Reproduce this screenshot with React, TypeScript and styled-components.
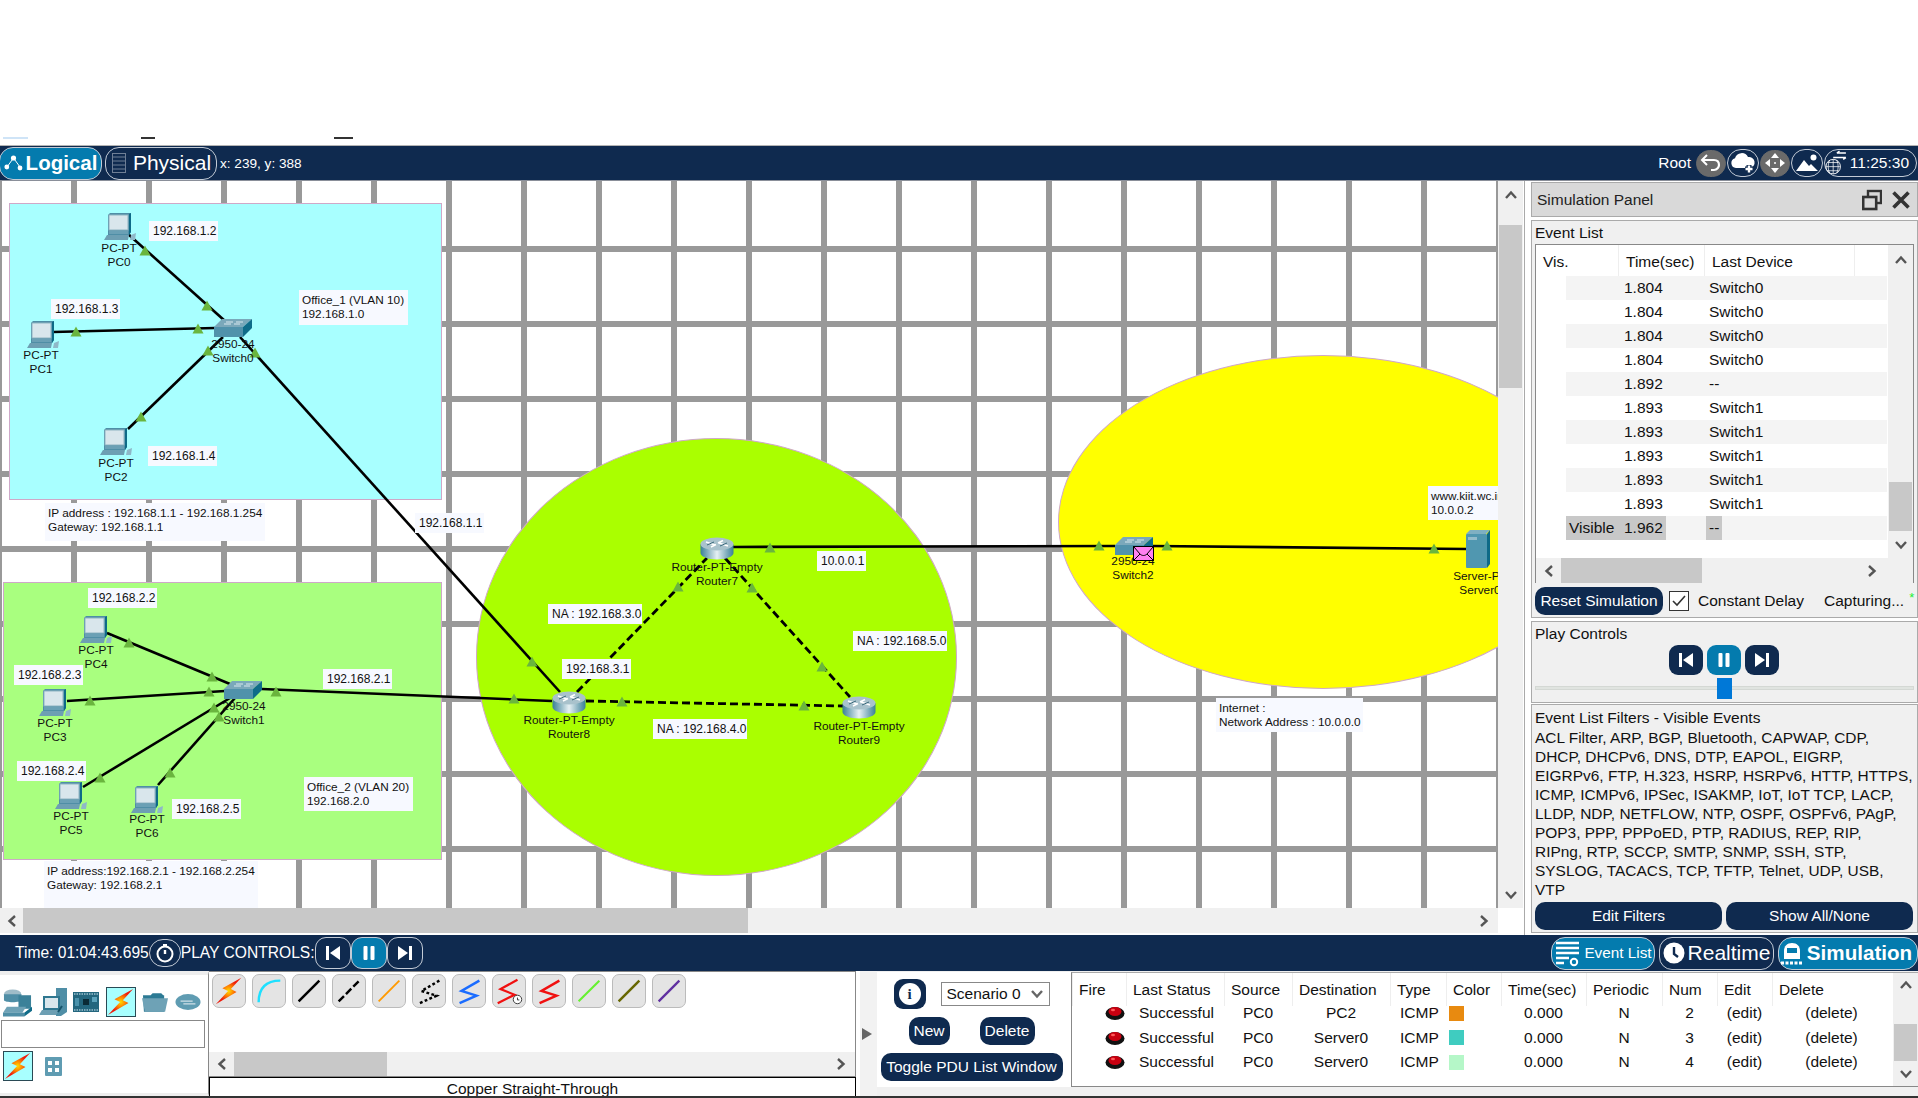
import React from 'react';
import styled, { createGlobalStyle } from 'styled-components';

const NAVY = '#0f2a4f';
const BLUE = '#047bae';
const Y0 = 181;

const Global = createGlobalStyle`
  html, body { margin: 0; padding: 0; background: #fff; overflow: hidden; }
  * { box-sizing: border-box; }
  body { font-family: "Liberation Sans", Arial, sans-serif; color: #111; }
`;

const Page = styled.div`
  width: 1918px; height: 1098px; display: flex; flex-direction: column; background: #fff; overflow: hidden;
`;
const TopStrip = styled.div`
  height: 146px; display: flex; align-items: flex-end; padding-bottom: 6px; border-bottom: 1px solid #b4b4b4; flex: none;
`;
const Mark = styled.div<{ $w: number; $ml: number; $c: string }>`
  width: ${p => p.$w}px; height: 2px; margin-left: ${p => p.$ml}px; background: ${p => p.$c};
`;

const NavBar = styled.div`
  height: 35px; flex: none; background: ${NAVY}; display: flex; align-items: center; color: #fff; border-bottom: 1px solid #8a8f99;
`;
const PillBtn = styled.div<{ $on?: boolean; $w: number; $h?: number; $size?: number; $bold?: boolean; $ml?: number; $grey?: boolean; $r?: number; $pr?: number }>`
  width: ${p => p.$w}px; height: ${p => p.$h ?? 33}px; margin-left: ${p => p.$ml ?? 0}px; padding-right: ${p => p.$pr ?? 0}px;
  flex: none; display: flex; align-items: center; justify-content: center; gap: 3px;
  background: ${p => (p.$on ? BLUE : p.$grey ? '#6a6a6a' : 'transparent')};
  border: 1px solid ${p => (p.$grey ? '#6a6a6a' : '#c3cbd6')};
  border-radius: ${p => p.$r ?? 14}px;
  color: #fff; white-space: nowrap;
  font-size: ${p => p.$size ?? 15.5}px; font-weight: ${p => (p.$bold ? 700 : 400)};
`;
const Coords = styled.span`font-size: 13.6px; margin-left: 3px;`;
const NavRight = styled.div`margin-left: auto; display: flex; align-items: center; height: 100%; padding-right: 1px;`;
const RootLabel = styled.span`font-size: 15.5px; margin-right: 5px;`;

const Main = styled.div`height: 754px; flex: none; display: flex;`;
const Workspace = styled.div`width: 1525px; flex: none; display: flex; flex-direction: column; border-right: 1px solid #aaa;`;
const CanvasRow = styled.div`height: 727px; display: flex; flex: none;`;
const Canvas = styled.div`
  width: 1498px; height: 727px; position: relative; overflow: hidden; flex: none; background-color: #fff;
  background-image:
    repeating-linear-gradient(90deg, #999 0 2px, transparent 2px 71px, #999 71px 75px),
    repeating-linear-gradient(180deg, transparent 0 65px, #999 65px 71px, transparent 71px 75px);
`;
const At = styled.div.attrs<{ $x: number; $y: number; $w?: number; $h?: number }>(p => ({
  style: { left: p.$x, top: p.$y - Y0, width: p.$w, height: p.$h },
}))`position: absolute;`;
const Zone = styled(At)<{ $fill: string; $round?: boolean }>`
  background: ${p => p.$fill}; border: 1px solid #cfa8c8; border-radius: ${p => (p.$round ? '50%' : '0')};
`;
const LinkLayer = styled.svg`position: absolute; left: 0; top: 0;`;
const Note = styled(At)`
  background: #f7f9ff; font-size: 11.8px; line-height: 14px; color: #111; padding: 3px 3px 0; white-space: nowrap; overflow: hidden;
`;
const IpNote = styled(Note)`font-size: 12px; line-height: 21px; padding: 0 4px; text-align: center;`;
const DevName = styled.div.attrs<{ $x: number; $y: number }>(p => ({
  style: { left: p.$x, top: p.$y - Y0 - 7 },
}))`
  position: absolute; transform: translateX(-50%); text-align: center; font-size: 11.8px; line-height: 14px; white-space: nowrap; color: #111;
`;
const DevIcon = styled(At)`line-height: 0;`;

const ScrollY = styled.div`width: 25px; flex: none; background: #f0f0f0; display: flex; flex-direction: column; align-items: center;`;
const ChevCell = styled.div<{ $h: number; $auto?: boolean; $w?: number; $end?: boolean }>`
  height: ${p => p.$h}px; width: ${p => p.$w ?? 25}px; flex: none; display: flex; align-items: center; justify-content: center;
  margin-top: ${p => (p.$auto ? 'auto' : '0')}; margin-left: ${p => (p.$end ? 'auto' : '0')};
`;
const ThumbY = styled.div<{ $top: number; $h: number }>`
  width: 23px; height: ${p => p.$h}px; margin-top: ${p => p.$top}px; background: #c8c8c8; flex: none;
`;
const ScrollX = styled.div<{ $h?: number }>`
  height: ${p => p.$h ?? 25}px; flex: none; background: #f0f0f0; display: flex; align-items: center;
`;
const ThumbX = styled.div<{ $w: number }>`width: ${p => p.$w}px; height: 100%; background: #c8c8c8; flex: none;`;
const HScrollWrap = styled.div`width: 1498px; flex: none;`;

const Side = styled.div`flex: 1; padding: 1px 0 0 6px; display: flex; flex-direction: column; background: #fff;`;
const Section = styled.div<{ $h: number; $mt: number }>`
  height: ${p => p.$h}px; margin-top: ${p => p.$mt}px; border: 1px solid #aaa; background: #f0f0f0; padding: 0 3px; flex: none; font-size: 15.5px;
`;
const SideTitle = styled.div`
  height: 35px; flex: none; background: #d9d9d9; border: 1px solid #aaa; display: flex; align-items: center; padding: 0 7px 0 5px; font-size: 15.5px; color: #222;
`;
const TitleIcons = styled.div`margin-left: auto; display: flex; align-items: center; gap: 10px;`;
const BoxLabel = styled.div`height: 23px; line-height: 24px;`;
const ListBox = styled.div`height: 339px; border: 1px solid #888; display: flex; flex-direction: column; background: #fff;`;
const ListTop = styled.div`height: 313px; display: flex; flex: none;`;
const ListBody = styled.div`flex: 1;`;
const ListHead = styled.div`height: 31px; display: flex; align-items: center;`;
const HeadCell = styled.div<{ $w: number }>`
  width: ${p => p.$w}px; height: 100%; padding-left: 7px; line-height: 33px; border-right: 1px solid #eee;
`;
const Row = styled.div<{ $alt?: boolean }>`
  height: 24px; margin-left: 30px; width: 321px; display: flex; align-items: center; line-height: 24px;
  background: ${p => (p.$alt ? '#f4f4f4' : '#fff')};
`;
const VisGroup = styled.div<{ $sel?: boolean }>`
  width: 100px; height: 100%; display: flex; background: ${p => (p.$sel ? '#c8c8c8' : 'transparent')};
`;
const VisCell = styled.div`width: 58px; padding-left: 3px;`;
const GapCell = styled.div`width: 40px; flex: none;`;
const DevCell = styled.div<{ $sel?: boolean }>`
  padding: 0 3px; height: 100%; background: ${p => (p.$sel ? '#c8c8c8' : 'transparent')};
`;
const ControlRow = styled.div`display: flex; align-items: center; margin-top: 4px; height: 28px; white-space: nowrap;`;
const DarkBtn = styled.div<{ $w: number; $h?: number }>`
  width: ${p => p.$w}px; height: ${p => p.$h ?? 28}px; flex: none; background: ${NAVY}; color: #fff; border-radius: 10px;
  display: flex; align-items: center; justify-content: center; font-size: 15.5px; white-space: nowrap;
`;
const Check = styled.div`
  width: 20px; height: 20px; border: 1px solid #333; background: #fff; margin-left: 6px; display: flex; align-items: center; justify-content: center; flex: none;
`;
const ConstLabel = styled.span`margin-left: 9px; flex: none;`;
const CaptureLabel = styled.span`margin-left: 20px; flex: none;`;
const Star = styled.span`color: #22ee33; margin-left: 5px; font-size: 13px; align-self: flex-start; margin-top: 3px; flex: none;`;
const PlayLabel = styled.div`height: 23px; line-height: 24px;`;
const PlayRow = styled.div`display: flex; justify-content: center; gap: 4px; padding-right: 1px;`;
const PlayBtn = styled.div<{ $on?: boolean }>`
  width: 34px; height: 30px; border-radius: 9px; background: ${p => (p.$on ? BLUE : NAVY)}; display: flex; align-items: center; justify-content: center;
`;
const SliderTrack = styled.div`
  height: 4px; margin-top: 11px; background: #e0e4e0; border: 1px solid #d4d8d4; position: relative;
`;
const SliderThumb = styled.div`
  position: absolute; left: 181px; top: -9px; width: 15px; height: 21px; background: #0078d7;
`;
const FilterTitle = styled.div`height: 23px; line-height: 25px;`;
const FilterLine = styled.div`height: 19px; line-height: 19px; white-space: nowrap; font-size: 15.45px;`;
const FilterBtns = styled.div`display: flex; gap: 4px; margin-top: 3px;`;

const TimeBar = styled.div`
  height: 36px; flex: none; background: ${NAVY}; color: #fff; display: flex; align-items: center; padding-left: 15px; font-size: 15.6px;
`;
const TimeRight = styled.div`margin-left: auto; display: flex; align-items: center; gap: 4px;`;
const CircleBtn = styled.div`
  width: 32px; height: 28px; border: 1px solid #c3cbd6; border-radius: 14px; display: flex; align-items: center; justify-content: center; flex: none;
`;
const MiniPlay = styled.div<{ $on?: boolean }>`
  width: 36px; height: 32px; flex: none; border: 1px solid #c3cbd6; border-radius: 11px; background: ${p => (p.$on ? BLUE : 'transparent')};
  display: flex; align-items: center; justify-content: center;
`;
const MiniGroup = styled.div`display: flex; margin-left: 0;`;

const Bottom = styled.div`height: 125px; flex: none; display: flex; background: #f0f0f0;`;
const Palette = styled.div`width: 209px; flex: none; background: #fff; border-right: 1px solid #888; border-top: 4px solid #eee; border-bottom: 3px solid #eee; padding-left: 1px;`;
const PaletteRow = styled.div`height: 30px; margin-top: 12px; display: flex; align-items: center; gap: 6.5px; padding-left: 2px;`;
const PaletteIcon = styled.div<{ $w: number; $sel?: boolean }>`
  width: ${p => p.$w}px; height: 30px; flex: none; line-height: 0; display: flex; align-items: center; justify-content: center;
  background: ${p => (p.$sel ? '#a8ffff' : 'transparent')}; border: ${p => (p.$sel ? '1px solid #2a4a55' : '0')};
`;
const PaletteInput = styled.div`width: 204px; height: 28px; margin-top: 3px; border: 1px solid #888; background: #fff;`;
const PaletteSub = styled.div`display: flex; align-items: center; gap: 12px; margin-top: 3px; padding-left: 2px;`;
const GridIcon = styled.div`line-height: 0;`;

const CablePanel = styled.div`width: 647px; flex: none; display: flex; flex-direction: column; background: #fff; border-top: 1px solid #888;`;
const CableRow = styled.div`height: 80px; flex: none; display: flex; align-items: flex-start; gap: 6px; padding: 2px 0 0 3px; border-right: 1px solid #888;`;
const CableBtn = styled.div`
  width: 34px; height: 34px; background: #e4e4e4; border: 1px solid #bbb; border-radius: 7px; line-height: 0; flex: none;
`;
const CableScroll = styled(ScrollX)`border-bottom: 1px solid #888; border-right: 1px solid #888;`;
const CableName = styled.div`
  flex: 1; border: 1px solid #000; border-bottom: 0; background: #fff; text-align: center; font-size: 15.5px; line-height: 21px; overflow: hidden;
`;
const Spacer = styled.div<{ $w: number }>`width: ${p => p.$w}px; flex: none; height: 100%;`;

const Gutter = styled.div`
  width: 21px; flex: none; background: #f2f2f2; border-left: 4px solid #fff; display: flex; align-items: center; justify-content: flex-start; padding-left: 1px;
`;
const Scenario = styled.div`
  width: 194px; flex: none; height: 115px; margin-top: 1px; background: #fff; display: flex; flex-direction: column; align-items: center; gap: 8px; padding: 7px 5px 0 0; font-size: 15.5px;
`;
const ScenRow = styled.div<{ $gap: number }>`display: flex; align-items: center; gap: ${p => p.$gap}px;`;
const InfoBtn = styled.div`
  width: 32px; height: 30px; border-radius: 9px; background: ${NAVY}; display: flex; align-items: center; justify-content: center;
`;
const InfoDot = styled.div`
  width: 22px; height: 22px; border-radius: 50%; background: #fff; color: ${NAVY}; font: bold 15px/22px "Liberation Serif", serif; text-align: center;
`;
const SelectBox = styled.div`
  width: 109px; height: 24px; border: 1px solid #888; background: #fff; display: flex; align-items: center; justify-content: space-between; padding: 0 5px; white-space: nowrap;
`;

const PduPanel = styled.div`flex: 1; display: flex; flex-direction: column; min-width: 0;`;
const PduBox = styled.div`height: 115px; margin-top: 1px; background: #fff; border-left: 1px solid #888; border-bottom: 1px solid #888; border-top: 1px solid #aaa; display: flex; font-size: 15.5px;`;
const PduTable = styled.div`flex: 1; display: flex; flex-direction: column;`;
const COLS = '54px 98px 68px 98px 56px 55px 85px 76px 55px 55px 119px';
const PduHead = styled.div`height: 31px; display: grid; grid-template-columns: ${COLS};`;
const PduHeadCell = styled.div`padding-left: 6px; line-height: 33px; border-left: 1px solid #eee; white-space: nowrap;`;
const PduRows = styled.div`margin-top: -3px;`;
const PduRow = styled.div`height: 24.5px; display: grid; grid-template-columns: ${COLS}; align-items: center; white-space: nowrap;`;
const FireCell = styled.div`padding-left: 33px; line-height: 0;`;
const LeftCell = styled.div<{ $pl: number }>`padding-left: ${p => p.$pl}px;`;
const CenterCell = styled.div`text-align: center;`;
const Swatch = styled.div<{ $c: string }>`width: 15px; height: 15px; margin-left: 3px; background: ${p => p.$c};`;

const BottomEdge = styled.div`height: 2px; flex: 1; background: #333;`;

/* ---------- drawings ---------- */

const Chevron = ({ dir, color = '#555' }: { dir: 'up' | 'down' | 'left' | 'right'; color?: string }) => {
  const r = { up: 0, right: 90, down: 180, left: 270 }[dir];
  return (
    <svg width="14" height="14" viewBox="0 0 14 14">
      <polyline points="2,10 7,4.5 12,10" fill="none" stroke={color} strokeWidth="2.4" transform={`rotate(${r} 7 7)`} />
    </svg>
  );
};

const PcIcon = () => (
  <svg width="33" height="27" viewBox="0 0 33 27">
    <polygon points="4,2 6,0 27,0 27,19 25,22 4,22" fill="#4f8ea6" />
    <polygon points="25,1 27,0 27,19 25,22" fill="#0e6a87" />
    <rect x="5" y="2" width="19" height="15" fill="#d9e6ec" stroke="#8fb4c2" />
    <rect x="5" y="18" width="19" height="3" fill="#6aa0b5" />
    <polygon points="3,22 25,22 24,27 0,27" fill="#6d9fb3" />
    <polygon points="27,22 32,20 31,27 26,27" fill="#8fb8c8" />
  </svg>
);
const SwitchIcon = () => (
  <svg width="38" height="18" viewBox="0 0 38 18">
    <polygon points="8,0 38,0 29,8 0,8" fill="#7aa8ba" />
    <path d="M12 3h7M22 3h7M10 5h7M20 5h6" stroke="#d8e8ee" strokeWidth="1" />
    <rect x="0" y="8" width="29" height="10" fill="#5092ab" />
    <polygon points="29,8 38,0 38,9 29,18" fill="#0f6c89" />
  </svg>
);
const RouterIcon = () => (
  <svg width="34" height="23" viewBox="0 0 34 23">
    <defs>
      <linearGradient id="rtBody" x1="0" x2="1" y1="0" y2="0">
        <stop offset="0" stopColor="#3a7f97" />
        <stop offset="0.5" stopColor="#e6f0f3" />
        <stop offset="1" stopColor="#3a7f97" />
      </linearGradient>
    </defs>
    <path d="M0.5 7v9c0 3.6 7.4 6.5 16.5 6.5s16.5-2.9 16.5-6.5V7z" fill="url(#rtBody)" />
    <ellipse cx="17" cy="7" rx="16.5" ry="6.5" fill="#a9c2cc" />
    <path d="M6 5l9 3M28 9l-9-3M11 10l5-2.5M23 3.5l-5 2.5" stroke="#fff" strokeWidth="1.5" />
    <path d="M7 8l7-3M27 6l-7 3" stroke="#38677a" strokeWidth="1" />
  </svg>
);
const ServerIcon = () => (
  <svg width="24" height="38" viewBox="0 0 24 38">
    <polygon points="0,4 4,0 24,0 20,4" fill="#7fb0c2" />
    <rect x="0" y="4" width="21" height="34" rx="1" fill="#5097b0" />
    <polygon points="21,4 24,0 24,34 21,38" fill="#0e6a87" />
    <rect x="2" y="7" width="9" height="3" fill="#93bccb" />
  </svg>
);
const Envelope = () => (
  <svg width="21" height="15" viewBox="0 0 21 15">
    <rect x="0.5" y="0.5" width="20" height="14" fill="#ff80f0" stroke="#000" />
    <path d="M1 1l6 7c2 2 5 2 7 0l6-7M1 14l6-6M20 14l-6-6" fill="none" stroke="#000" strokeWidth="1" />
  </svg>
);
const BOLT = '28,1 8,12 14,15 1,29 23,16 17,13';
const Bolt = ({ s = 30 }: { s?: number }) => (
  <svg width={s} height={s} viewBox="0 0 30 30">
    <defs>
      <radialGradient id="boltFill" cx="0.5" cy="0.5" r="0.5">
        <stop offset="0" stopColor="#ffdd00" />
        <stop offset="0.35" stopColor="#ff8a00" />
        <stop offset="0.8" stopColor="#ee1c0c" />
      </radialGradient>
    </defs>
    <polygon points={BOLT} fill="url(#boltFill)" />
  </svg>
);

const PrevGlyph = ({ s = 1 }: { s?: number }) => (
  <svg width={16 * s} height={16 * s} viewBox="0 0 16 16">
    <rect x="1" y="1" width="3" height="14" fill="#fff" />
    <polygon points="15,1 15,15 5,8" fill="#fff" />
  </svg>
);
const NextGlyph = ({ s = 1 }: { s?: number }) => (
  <svg width={16 * s} height={16 * s} viewBox="0 0 16 16">
    <rect x="12" y="1" width="3" height="14" fill="#fff" />
    <polygon points="1,1 1,15 11,8" fill="#fff" />
  </svg>
);
const PauseGlyph = ({ s = 1 }: { s?: number }) => (
  <svg width={16 * s} height={16 * s} viewBox="0 0 16 16">
    <rect x="2.5" y="1" width="4" height="14" rx="1" fill="#fff" />
    <rect x="9.5" y="1" width="4" height="14" rx="1" fill="#fff" />
  </svg>
);

const LogicalGlyph = () => (
  <svg width="19" height="18" viewBox="0 0 19 18">
    <path d="M3 13L9.5 4L16 13" fill="none" stroke="#fff" strokeWidth="1" />
    <circle cx="9.5" cy="4" r="2.6" fill="#fff" />
    <circle cx="2.8" cy="13" r="2.4" fill="#fff" />
    <circle cx="16" cy="14" r="2.4" fill="#fff" />
  </svg>
);
const PhysicalGlyph = () => (
  <svg width="19" height="20" viewBox="0 0 19 20">
    <rect x="1.5" y="0.5" width="13" height="19" fill="none" stroke="#6f7f96" />
    <path d="M1.5 4h13M1.5 8h13M1.5 12h13M1.5 16h13" stroke="#6f7f96" />
  </svg>
);
const UndoGlyph = () => (
  <svg width="22" height="20" viewBox="0 0 22 20">
    <path d="M7 2L2 7L7 12" fill="none" stroke="#fff" strokeWidth="2" />
    <path d="M3 7h11c4 0 5 3 5 5s-2 5-5 5h-3" fill="none" stroke="#fff" strokeWidth="2.2" />
  </svg>
);
const CloudPlusGlyph = () => (
  <svg width="26" height="22" viewBox="0 0 26 22">
    <path d="M6 16a5 5 0 0 1-1-9.8A7 7 0 0 1 18 5a5.5 5.5 0 0 1 2 11z" fill="#fff" />
    <path d="M19 13v8M15 17h8" stroke={NAVY} strokeWidth="5" />
    <path d="M19 13.5v7M15.5 17h7" stroke="#fff" strokeWidth="2.4" />
  </svg>
);
const MoveGlyph = () => (
  <svg width="22" height="22" viewBox="0 0 22 22">
    <polygon points="11,1 15,6 7,6" fill="#fff" />
    <polygon points="11,21 15,16 7,16" fill="#fff" />
    <polygon points="1,11 6,7 6,15" fill="#fff" />
    <polygon points="21,11 16,7 16,15" fill="#fff" />
    <circle cx="11" cy="11" r="1" fill="#fff" />
  </svg>
);
const ImageGlyph = () => (
  <svg width="22" height="18" viewBox="0 0 22 18">
    <polygon points="0,17 8,6 13,12 15,10 22,17" fill="#fff" />
    <circle cx="17.5" cy="3.5" r="3" fill="#fff" />
  </svg>
);
const GlobeArrows = () => (
  <svg width="23" height="26" viewBox="0 0 24 26">
    <circle cx="9" cy="17" r="8" fill="none" stroke="#fff" strokeWidth="1" />
    <path d="M1 17h16M9 9v16M3 12.5h12M3 21.5h12M5 10c-2 4-2 10 0 14M13 10c2 4 2 10 0 14" fill="none" stroke="#fff" strokeWidth="0.8" />
    <path d="M13 2h10M13 2l3-2M9 7h14M23 7l-3 2" stroke="#fff" strokeWidth="1.6" fill="none" />
  </svg>
);
const ClockReset = () => (
  <svg width="20" height="20" viewBox="0 0 20 20">
    <circle cx="10" cy="11" r="7.5" fill="none" stroke="#fff" strokeWidth="2" />
    <rect x="8" y="1" width="4" height="2.5" fill="#fff" />
    <path d="M10 7v4" stroke="#fff" strokeWidth="2.4" />
  </svg>
);
const ListGlyph = () => (
  <svg width="27" height="27" viewBox="0 0 27 27">
    <path d="M2 3h23M2 8h23M2 13h23M2 18h13M2 23h8" stroke="#fff" strokeWidth="2.6" />
    <circle cx="20" cy="22" r="3.2" fill="none" stroke="#fff" strokeWidth="2" />
  </svg>
);
const ClockGlyph = () => (
  <svg width="22" height="22" viewBox="0 0 22 22">
    <circle cx="11" cy="11" r="10.5" fill="#fff" />
    <path d="M11 5v7l4 3" fill="none" stroke={NAVY} strokeWidth="2.4" />
  </svg>
);
const SimGlyph = () => (
  <svg width="24" height="24" viewBox="0 0 24 24">
    <path d="M4 18V10c0-5 3-8 8-8s8 3 8 8v8z" fill="#fff" />
    <rect x="7" y="7" width="10" height="5" fill={BLUE} />
    <path d="M1 22h22" stroke="#fff" strokeWidth="3" strokeDasharray="3 1.5" />
  </svg>
);
const RestoreGlyph = () => (
  <svg width="20" height="22" viewBox="0 0 20 22">
    <rect x="6" y="2" width="13" height="12" fill="none" stroke="#333" strokeWidth="2.4" />
    <rect x="1.2" y="8" width="13" height="12" fill="#d9d9d9" stroke="#333" strokeWidth="2.6" />
  </svg>
);
const CloseGlyph = () => (
  <svg width="18" height="18" viewBox="0 0 18 18">
    <path d="M1.5 1.5l15 15M16.5 1.5l-15 15" stroke="#333" strokeWidth="3.6" />
  </svg>
);
const CheckGlyph = () => (
  <svg width="14" height="12" viewBox="0 0 14 12">
    <path d="M1 6l4 4 8-9" fill="none" stroke="#333" strokeWidth="1.6" />
  </svg>
);
const DevicesGlyph = () => (
  <svg width="29" height="30" viewBox="0 0 30 30">
    <ellipse cx="10" cy="7" rx="9" ry="5" fill="#9fbcc8" />
    <path d="M1 7v6c0 3 18 3 18 0V7z" fill="#4f8ea6" />
    <rect x="16" y="8" width="13" height="14" fill="#3b8199" />
    <polygon points="4,20 24,20 20,26 0,26" fill="#6ea2b6" />
    <rect x="0" y="26" width="22" height="4" fill="#4f8ea6" />
    <polygon points="22,26 30,20 30,24 22,30" fill="#0f6c89" />
  </svg>
);
const EndDevGlyph = () => (
  <svg width="28" height="28" viewBox="0 0 28 28">
    <polygon points="17,0 28,0 28,24 22,28 17,28" fill="#4f8ea6" />
    <rect x="5" y="9" width="15" height="12" fill="#d9e6ec" stroke="#2f7790" strokeWidth="2" />
    <polygon points="3,22 20,22 17,27 0,27" fill="#6d9fb3" />
    <path d="M19 24l4-6" stroke="#16536a" strokeWidth="2" />
  </svg>
);
const BoardGlyph = () => (
  <svg width="26" height="20" viewBox="0 0 26 20">
    <rect width="26" height="20" fill="#23667e" />
    <path d="M1 2h24M1 18h24" stroke="#9cc1cf" strokeWidth="1.5" strokeDasharray="1.5 1" />
    <rect x="10" y="7" width="6" height="6" fill="#0a2a36" />
    <rect x="2" y="6" width="4" height="8" fill="#4b92ab" />
    <rect x="19" y="5" width="5" height="5" fill="#5ba2bb" />
  </svg>
);
const FolderGlyph = () => (
  <svg width="26" height="20" viewBox="0 0 27 20">
    <path d="M1 3h8l2-2h9l2 2h1v17H2z" fill="#2c7a94" />
    <polygon points="0,6 27,6 24,20 3,20" fill="#6ea2b6" />
  </svg>
);
const CloudGlyph = () => (
  <svg width="26" height="18" viewBox="0 0 28 18">
    <ellipse cx="14" cy="9" rx="13.5" ry="8.5" fill="#5f9cb2" />
    <path d="M6 8h13M9 11h13" stroke="#cfe0e7" strokeWidth="1.5" />
  </svg>
);
const ModulesGlyph = () => (
  <svg width="17" height="19" viewBox="0 0 17 19">
    <rect width="17" height="19" rx="1" fill="#5f9cb2" />
    <rect x="3" y="4" width="4" height="4" fill="#fff" />
    <rect x="10" y="4" width="4" height="4" fill="#fff" />
    <rect x="3" y="11" width="4" height="4" fill="#fff" />
    <rect x="10" y="11" width="4" height="4" fill="#fff" />
  </svg>
);
const Led = () => (
  <svg width="20" height="14" viewBox="0 0 20 14">
    <ellipse cx="10" cy="7.5" rx="9.5" ry="6.5" fill="#111" />
    <ellipse cx="10" cy="5.5" rx="6.5" ry="4.5" fill="#c80010" />
    <ellipse cx="8" cy="4" rx="2" ry="1.3" fill="#ff5a5a" />
  </svg>
);

const ZIG = '28,6 9,17 25,22 7,30';
const CableIcon = ({ kind }: { kind: number }) => {
  const straight = (c: string, w = 2.4, dash?: string) => (
    <line x1="6" y1="28" x2="28" y2="6" stroke={c} strokeWidth={w} strokeDasharray={dash} />
  );
  return (
    <svg width="32" height="32" viewBox="0 0 34 34">
      {kind === 0 && <g transform="translate(2 2)"><polygon points={BOLT} fill="url(#boltFill)" /></g>}
      {kind === 1 && <path d="M6 29C6 14 14 6 29 6" fill="none" stroke="#1ee0ff" strokeWidth="2.6" />}
      {kind === 2 && straight('#000', 2.6)}
      {kind === 3 && straight('#000', 2.6, '8 3')}
      {kind === 4 && straight('#ff9a00', 2)}
      {kind === 5 && <polyline points={ZIG} fill="none" stroke="#000" strokeWidth="2.6" strokeDasharray="3 2.5" />}
      {kind === 6 && <polyline points={ZIG} fill="none" stroke="#1a6cff" strokeWidth="2.6" />}
      {kind === 7 && (
        <g>
          <polyline points="26,5 8,15 23,21 5,30" fill="none" stroke="#f01010" strokeWidth="2.4" />
          <circle cx="26" cy="26" r="4.5" fill="#fff" stroke="#333" />
          <path d="M26 24v2.5h2" fill="none" stroke="#333" />
        </g>
      )}
      {kind === 8 && <polyline points={ZIG} fill="none" stroke="#f01010" strokeWidth="2.6" />}
      {kind === 9 && straight('#66f030', 2.2)}
      {kind === 10 && straight('#666600', 2.6)}
      {kind === 11 && straight('#6030a0', 2.4)}
    </svg>
  );
};

/* ---------- data ---------- */

type L = [number, number, number, number, boolean?];
const links: L[] = [
  [128, 234, 225, 321], [53, 332, 215, 328], [128, 429, 223, 337], [240, 337, 560, 692],
  [107, 633, 230, 684], [67, 701, 225, 691], [83, 787, 230, 698], [158, 785, 235, 698], [262, 689, 552, 701],
  [577, 692, 707, 558, true], [725, 558, 850, 697, true], [586, 701, 843, 706, true],
  [733, 547, 1115, 546], [1152, 546, 1467, 549],
];
const tris = [
  [145, 251], [207, 306], [76, 332], [198, 329], [141, 417], [208, 351], [255, 353], [532, 662],
  [129, 643], [212, 677], [90, 701], [209, 692], [100, 778], [214, 708], [170, 773], [219, 717], [276, 692], [514, 699],
  [678, 587], [752, 588], [822, 667], [622, 702], [804, 706], [770, 548], [1099, 546], [1167, 546], [1434, 549],
];
const pcs: [number, number, string, number, number][] = [
  [104, 213, 'PC0', 119, 248], [27, 321, 'PC1', 41, 355], [100, 428, 'PC2', 116, 463],
  [80, 616, 'PC4', 96, 650], [39, 689, 'PC3', 55, 723], [55, 782, 'PC5', 71, 816], [131, 786, 'PC6', 147, 819],
];
const names: [number, number, string, string][] = [
  [233, 344, '2950-24', 'Switch0'], [244, 706, '2950-24', 'Switch1'], [1133, 561, '2950-24', 'Switch2'],
  [717, 567, 'Router-PT-Empty', 'Router7'], [569, 720, 'Router-PT-Empty', 'Router8'], [859, 726, 'Router-PT-Empty', 'Router9'],
  [1480, 576, 'Server-PT', 'Server0'],
];
const ipNotes: [number, number, number, string][] = [
  [149, 221, 69, '192.168.1.2'], [51, 299, 69, '192.168.1.3'], [148, 446, 69, '192.168.1.4'], [415, 513, 69, '192.168.1.1'],
  [88, 588, 69, '192.168.2.2'], [14, 665, 69, '192.168.2.3'], [17, 761, 69, '192.168.2.4'], [172, 799, 69, '192.168.2.5'], [323, 669, 69, '192.168.2.1'],
  [548, 604, 94, 'NA : 192.168.3.0'], [562, 659, 69, '192.168.3.1'], [653, 719, 94, 'NA : 192.168.4.0'], [853, 631, 94, 'NA : 192.168.5.0'], [817, 551, 49, '10.0.0.1'],
];
const textNotes: [number, number, number, number, string, string][] = [
  [299, 290, 109, 35, 'Office_1 (VLAN 10)', '192.168.1.0'],
  [45, 503, 220, 38, 'IP address : 192.168.1.1 - 192.168.1.254', 'Gateway: 192.168.1.1'],
  [304, 777, 109, 34, 'Office_2 (VLAN 20)', '192.168.2.0'],
  [44, 861, 214, 47, 'IP address:192.168.2.1 - 192.168.2.254', 'Gateway: 192.168.2.1'],
  [1216, 698, 147, 34, 'Internet :', 'Network Address : 10.0.0.0'],
  [1428, 486, 72, 34, 'www.kiit.wc.in', '10.0.0.2'],
];
const events: [string, string][] = [
  ['1.804', 'Switch0'], ['1.804', 'Switch0'], ['1.804', 'Switch0'], ['1.804', 'Switch0'], ['1.892', '--'],
  ['1.893', 'Switch1'], ['1.893', 'Switch1'], ['1.893', 'Switch1'], ['1.893', 'Switch1'], ['1.893', 'Switch1'],
];
const filterLines = [
  'ACL Filter, ARP, BGP, Bluetooth, CAPWAP, CDP,',
  'DHCP, DHCPv6, DNS, DTP, EAPOL, EIGRP,',
  'EIGRPv6, FTP, H.323, HSRP, HSRPv6, HTTP, HTTPS,',
  'ICMP, ICMPv6, IPSec, ISAKMP, IoT, IoT TCP, LACP,',
  'LLDP, NDP, NETFLOW, NTP, OSPF, OSPFv6, PAgP,',
  'POP3, PPP, PPPoED, PTP, RADIUS, REP, RIP,',
  'RIPng, RTP, SCCP, SMTP, SNMP, SSH, STP,',
  'SYSLOG, TACACS, TCP, TFTP, Telnet, UDP, USB,',
  'VTP',
];
const pduHeads = ['Fire', 'Last Status', 'Source', 'Destination', 'Type', 'Color', 'Time(sec)', 'Periodic', 'Num', 'Edit', 'Delete'];
const pdus: [string, string, string, string][] = [
  ['PC2', '#e88a10', '2', 'PC0'], ['Server0', '#3fccc0', '3', 'PC0'], ['Server0', '#b5f7c8', '4', 'PC0'],
];

export default function App() {
  return (
    <Page>
      <Global />
      <TopStrip>
        <Mark $w={25} $ml={3} $c="#cfe4f7" />
        <Mark $w={14} $ml={113} $c="#333" />
        <Mark $w={19} $ml={179} $c="#333" />
      </TopStrip>

      <NavBar>
        <PillBtn $on $w={103} $size={20.5} $bold $ml={-1}><LogicalGlyph />Logical</PillBtn>
        <PillBtn $w={112} $size={21} $ml={3}><PhysicalGlyph />Physical</PillBtn>
        <Coords>x: 239, y: 388</Coords>
        <NavRight>
          <RootLabel>Root</RootLabel>
          <PillBtn $grey $w={30} $h={27} $r={14}><UndoGlyph /></PillBtn>
          <PillBtn $w={32} $h={28} $ml={1}><CloudPlusGlyph /></PillBtn>
          <PillBtn $grey $w={30} $h={27} $ml={1}><MoveGlyph /></PillBtn>
          <PillBtn $w={32} $h={28} $ml={1}><ImageGlyph /></PillBtn>
          <PillBtn $w={93} $h={28} $ml={1} $pr={7}><GlobeArrows />11:25:30</PillBtn>
        </NavRight>
      </NavBar>

      <Main>
        <Workspace>
          <CanvasRow>
            <Canvas>
              <Zone $x={9} $y={203} $w={433} $h={297} $fill="#a8ffff" />
              <Zone $x={3} $y={582} $w={439} $h={278} $fill="#a9ff7f" />
              <Zone $x={476} $y={438} $w={481} $h={438} $fill="#aaff00" $round />
              <Zone $x={1058} $y={355} $w={530} $h={334} $fill="#ffff00" $round />
              <LinkLayer width="1498" height="727" viewBox={`0 ${Y0} 1498 727`}>
                {links.map(([a, b, c, d, dash], i) => (
                  <line key={i} x1={a} y1={b} x2={c} y2={d} stroke="#000" strokeWidth={dash ? 2.8 : 2.6} strokeDasharray={dash ? '8 4' : undefined} />
                ))}
                {tris.map(([x, y], i) => (
                  <polygon key={i} points={`${x},${y - 5.5} ${x - 5.5},${y + 4.5} ${x + 5.5},${y + 4.5}`} fill="#6ab53e" />
                ))}
              </LinkLayer>
              {pcs.map(([x, y]) => <DevIcon key={`${x}-${y}`} $x={x} $y={y}><PcIcon /></DevIcon>)}
              <DevIcon $x={214} $y={319}><SwitchIcon /></DevIcon>
              <DevIcon $x={224} $y={681}><SwitchIcon /></DevIcon>
              <DevIcon $x={1115} $y={537}><SwitchIcon /></DevIcon>
              <DevIcon $x={700} $y={537}><RouterIcon /></DevIcon>
              <DevIcon $x={552} $y={691}><RouterIcon /></DevIcon>
              <DevIcon $x={842} $y={696}><RouterIcon /></DevIcon>
              <DevIcon $x={1466} $y={530}><ServerIcon /></DevIcon>
              {pcs.map(([, , n, cx, y1]) => (
                <DevName key={n} $x={cx} $y={y1}>PC-PT<br />{n}</DevName>
              ))}
              {names.map(([cx, y, a, b]) => (
                <DevName key={b} $x={cx} $y={y}>{a}<br />{b}</DevName>
              ))}
              <DevIcon $x={1133} $y={546}><Envelope /></DevIcon>
              {ipNotes.map(([x, y, w, t]) => <IpNote key={t} $x={x} $y={y} $w={w} $h={20}>{t}</IpNote>)}
              {textNotes.map(([x, y, w, h, a, b]) => (
                <Note key={a} $x={x} $y={y} $w={w} $h={h}>{a}<br />{b}</Note>
              ))}
            </Canvas>
            <ScrollY>
              <ChevCell $h={28}><Chevron dir="up" /></ChevCell>
              <ThumbY $top={16} $h={163} />
              <ChevCell $h={26} $auto><Chevron dir="down" /></ChevCell>
            </ScrollY>
          </CanvasRow>
          <HScrollWrap>
            <ScrollX>
              <ChevCell $h={25} $w={23}><Chevron dir="left" /></ChevCell>
              <ThumbX $w={725} />
              <ChevCell $h={25} $w={28} $end><Chevron dir="right" /></ChevCell>
            </ScrollX>
          </HScrollWrap>
        </Workspace>

        <Side>
          <SideTitle>
            Simulation Panel
            <TitleIcons><RestoreGlyph /><CloseGlyph /></TitleIcons>
          </SideTitle>
          <Section $h={398} $mt={3}>
            <BoxLabel>Event List</BoxLabel>
            <ListBox>
              <ListTop>
                <ListBody>
                  <ListHead>
                    <HeadCell $w={83}>Vis.</HeadCell>
                    <HeadCell $w={86}>Time(sec)</HeadCell>
                    <HeadCell $w={150}>Last Device</HeadCell>
                  </ListHead>
                  {events.map(([t, d], i) => (
                    <Row key={i} $alt={i % 2 === 0}>
                      <VisGroup><VisCell />{t}</VisGroup>
                      <GapCell />
                      <DevCell>{d}</DevCell>
                    </Row>
                  ))}
                  <Row $alt>
                    <VisGroup $sel><VisCell>Visible</VisCell>1.962</VisGroup>
                    <GapCell />
                    <DevCell $sel>--</DevCell>
                  </Row>
                </ListBody>
                <ScrollY>
                  <ChevCell $h={30}><Chevron dir="up" /></ChevCell>
                  <ThumbY $top={207} $h={49} />
                  <ChevCell $h={27} $auto><Chevron dir="down" /></ChevCell>
                </ScrollY>
              </ListTop>
              <ScrollX>
                <ChevCell $h={25}><Chevron dir="left" /></ChevCell>
                <ThumbX $w={141} />
                <Spacer $w={157} />
                <ChevCell $h={25}><Chevron dir="right" /></ChevCell>
              </ScrollX>
            </ListBox>
            <ControlRow>
              <DarkBtn $w={128}>Reset Simulation</DarkBtn>
              <Check><CheckGlyph /></Check>
              <ConstLabel>Constant Delay</ConstLabel>
              <CaptureLabel>Capturing...</CaptureLabel>
              <Star>*</Star>
            </ControlRow>
          </Section>
          <Section $h={82} $mt={3}>
            <PlayLabel>Play Controls</PlayLabel>
            <PlayRow>
              <PlayBtn><PrevGlyph /></PlayBtn>
              <PlayBtn $on><PauseGlyph /></PlayBtn>
              <PlayBtn><NextGlyph /></PlayBtn>
            </PlayRow>
            <SliderTrack><SliderThumb /></SliderTrack>
          </Section>
          <Section $h={229} $mt={1}>
            <FilterTitle>Event List Filters - Visible Events</FilterTitle>
            {filterLines.map(l => <FilterLine key={l}>{l}</FilterLine>)}
            <FilterBtns>
              <DarkBtn $w={187}>Edit Filters</DarkBtn>
              <DarkBtn $w={187}>Show All/None</DarkBtn>
            </FilterBtns>
          </Section>
        </Side>
      </Main>

      <TimeBar>
        Time: 01:04:43.695
        <CircleBtn><ClockReset /></CircleBtn>
        PLAY CONTROLS:
        <MiniGroup>
          <MiniPlay><PrevGlyph /></MiniPlay>
          <MiniPlay $on><PauseGlyph /></MiniPlay>
          <MiniPlay><NextGlyph /></MiniPlay>
        </MiniGroup>
        <TimeRight>
          <PillBtn $on $w={104} $size={15.3}><ListGlyph />Event List</PillBtn>
          <PillBtn $w={115} $size={21} $r={13}><ClockGlyph />Realtime</PillBtn>
          <PillBtn $on $w={140} $size={20.6} $bold $pr={4}><SimGlyph />Simulation</PillBtn>
        </TimeRight>
      </TimeBar>

      <Bottom>
        <Palette>
          <PaletteRow>
            <PaletteIcon $w={29}><DevicesGlyph /></PaletteIcon>
            <PaletteIcon $w={28}><EndDevGlyph /></PaletteIcon>
            <PaletteIcon $w={26}><BoardGlyph /></PaletteIcon>
            <PaletteIcon $w={30} $sel><Bolt s={28} /></PaletteIcon>
            <PaletteIcon $w={26}><FolderGlyph /></PaletteIcon>
            <PaletteIcon $w={26}><CloudGlyph /></PaletteIcon>
          </PaletteRow>
          <PaletteInput />
          <PaletteSub>
            <PaletteIcon $w={30} $sel><Bolt s={28} /></PaletteIcon>
            <GridIcon><ModulesGlyph /></GridIcon>
          </PaletteSub>
        </Palette>
        <CablePanel>
          <CableRow>
            {Array.from({ length: 12 }, (_, i) => <CableBtn key={i}><CableIcon kind={i} /></CableBtn>)}
          </CableRow>
          <CableScroll>
            <ChevCell $h={24}><Chevron dir="left" /></ChevCell>
            <ThumbX $w={153} />
            <Spacer $w={441} />
            <ChevCell $h={24}><Chevron dir="right" /></ChevCell>
          </CableScroll>
          <CableName>Copper Straight-Through</CableName>
        </CablePanel>
        <Gutter>
          <svg width="12" height="14" viewBox="0 0 12 14"><polygon points="1,1 11,7 1,13" fill="#666" /></svg>
        </Gutter>
        <Scenario>
          <ScenRow $gap={15}>
            <InfoBtn><InfoDot>i</InfoDot></InfoBtn>
            <SelectBox>Scenario 0 <Chevron dir="down" color="#666" /></SelectBox>
          </ScenRow>
          <ScenRow $gap={30}>
            <DarkBtn $w={41}>New</DarkBtn>
            <DarkBtn $w={55}>Delete</DarkBtn>
          </ScenRow>
          <DarkBtn $w={182}>Toggle PDU List Window</DarkBtn>
        </Scenario>
        <PduPanel>
          <PduBox>
            <PduTable>
              <PduHead>
                {pduHeads.map(h => <PduHeadCell key={h}>{h}</PduHeadCell>)}
              </PduHead>
              <PduRows>
                {pdus.map(([dest, color, num, src]) => (
                  <PduRow key={num}>
                    <FireCell><Led /></FireCell>
                    <LeftCell $pl={13}>Successful</LeftCell>
                    <CenterCell>{src}</CenterCell>
                    <CenterCell>{dest}</CenterCell>
                    <LeftCell $pl={10}>ICMP</LeftCell>
                    <Swatch $c={color} />
                    <CenterCell>0.000</CenterCell>
                    <CenterCell>N</CenterCell>
                    <CenterCell>{num}</CenterCell>
                    <CenterCell>(edit)</CenterCell>
                    <CenterCell>(delete)</CenterCell>
                  </PduRow>
                ))}
              </PduRows>
            </PduTable>
            <ScrollY>
              <ChevCell $h={24}><Chevron dir="up" /></ChevCell>
              <ThumbY $top={27} $h={37} />
              <ChevCell $h={26}><Chevron dir="down" /></ChevCell>
            </ScrollY>
          </PduBox>
        </PduPanel>
      </Bottom>
      <BottomEdge />
    </Page>
  );
}
